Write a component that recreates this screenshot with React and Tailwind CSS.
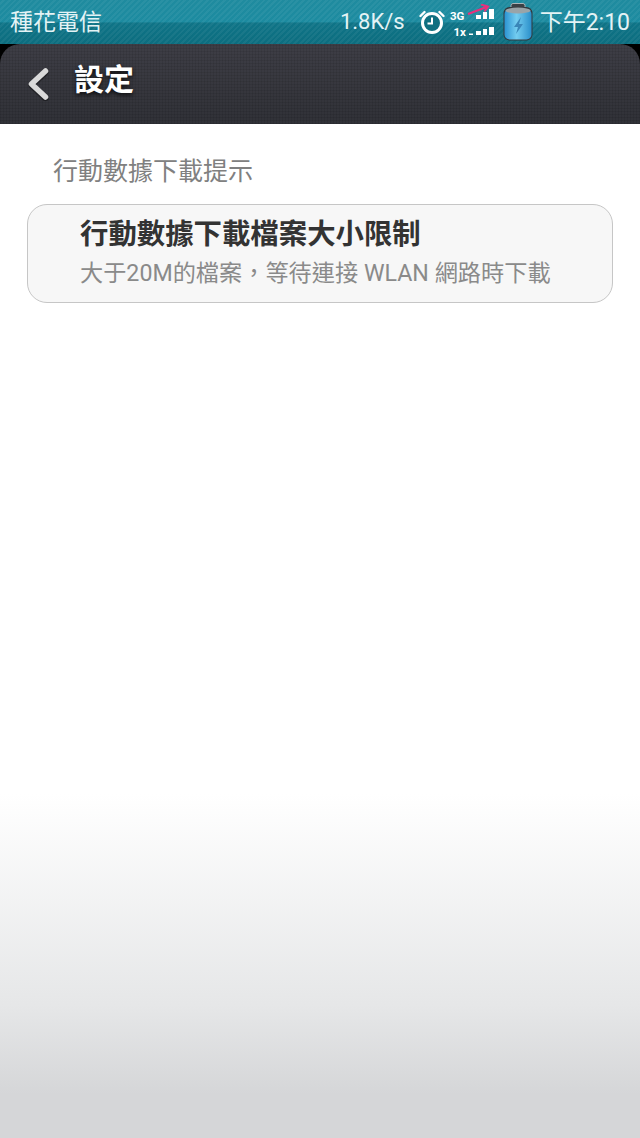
import React from 'react';

const cjk = "font-['Roboto','Noto_Sans_CJK_TC',sans-serif]";

const AlarmIcon = () => (
  <svg width="26" height="24" viewBox="0 0 26 24" fill="none">
    <circle cx="13" cy="13" r="9.5" fill="#0f6f80" stroke="#fff" strokeWidth="3" />
    <path d="M13 7.5V13.5H8.5" stroke="#fff" strokeWidth="2" />
    <path d="M1.5 6 5.5 2M24.5 6 20.5 2" stroke="#fff" strokeWidth="2.4" strokeLinecap="round" />
  </svg>
);

const SignalIcon = () => (
  <svg width="44" height="36" viewBox="0 0 44 36">
    <g fill="#fff">
      <text x="0" y="15.5" fontSize="11.5" fontWeight="700" fontFamily="Roboto, sans-serif">3G</text>
      <text x="3.5" y="31.5" fontSize="11.5" fontWeight="700" fontFamily="Roboto, sans-serif">1x</text>
      <rect x="26" y="11" width="5" height="4" />
      <rect x="33" y="8" width="4" height="7" />
      <rect x="39" y="5" width="5" height="10" />
      <rect x="19" y="29.5" width="4" height="1.5" />
      <rect x="26" y="27" width="5" height="4" />
      <rect x="33" y="25" width="4" height="6" />
      <rect x="39" y="23" width="5" height="8" />
    </g>
    <path d="M18 10 38 2.5M31 0.5l7 2-3.5 5" stroke="#e8307c" strokeWidth="2" fill="none" />
  </svg>
);

const BatteryIcon = () => (
  <svg width="30" height="38" viewBox="0 0 30 38">
    <defs>
      <linearGradient id="batt" x1="0" y1="0" x2="1" y2="0">
        <stop offset="0" stopColor="#2b93d2" />
        <stop offset="0.45" stopColor="#74cdf0" />
        <stop offset="1" stopColor="#2a8fca" />
      </linearGradient>
    </defs>
    <rect x="8" y="0.5" width="14" height="6" rx="2" fill="#3a3f44" stroke="#aab4b8" />
    <rect x="0.5" y="4" width="29" height="33.5" rx="6" fill="#32393e" />
    <rect x="1.5" y="6" width="27" height="30.5" rx="5" fill="url(#batt)" />
    <ellipse cx="15" cy="7.5" rx="12.5" ry="3" fill="#9aa4a8" />
    <path d="M18 14 11 24h4l-2 7 7-10h-4z" fill="#3a86b8" />
  </svg>
);

const BackIcon = () => (
  <svg width="24" height="34" viewBox="0 0 24 34" fill="none">
    <path d="M19.5 4 5.5 17l14 13" stroke="#000" strokeOpacity="0.35" strokeWidth="6" strokeLinecap="round" strokeLinejoin="round" transform="translate(0 1.5)" />
    <path d="M19.5 4 5.5 17l14 13" stroke="#d9d9d9" strokeWidth="5.5" strokeLinecap="round" strokeLinejoin="round" />
  </svg>
);

const App = () => {
  return (
    <div className={`w-[640px] h-[1138px] flex flex-col overflow-hidden bg-black ${cjk}`}>
      {/* status bar */}
      <div className="h-[44px] shrink-0 flex items-center pl-[10px] pr-[10px] text-[#e4f3f5] bg-[repeating-linear-gradient(135deg,transparent_0_2px,rgba(255,255,255,0.05)_2px_4px),linear-gradient(to_bottom,#1f8b9f_0,#1c8ba0_50%,#0f7487_52%,#0c6d7f_100%)]">
        <span className="text-[23px] leading-none">種花電信</span>
        <span className="ml-auto text-[22px] leading-none mr-[14px]">1.8K/s</span>
        <AlarmIcon />
        <div className="ml-[5px] mr-[9px]">
          <SignalIcon />
        </div>
        <BatteryIcon />
        <span className="ml-[7px] text-[23px] leading-none">下午2:10</span>
      </div>

      {/* title bar */}
      <div className="h-[80px] shrink-0 flex items-center pl-[26px] rounded-t-[20px] bg-[repeating-linear-gradient(0deg,rgba(0,0,0,0.08)_0_1px,transparent_1px_3px),repeating-linear-gradient(90deg,rgba(0,0,0,0.08)_0_1px,transparent_1px_3px),linear-gradient(to_bottom,#3e3e46,#303137)]">
        <BackIcon />
        <h1 className="ml-[24px] -mt-[8px] text-[30px] leading-none font-bold text-white [text-shadow:0_2px_4px_rgba(0,0,0,0.8)]">設定</h1>
      </div>

      {/* content */}
      <div className="flex-1 px-[27px] bg-[linear-gradient(to_bottom,#ffffff_0,#ffffff_670px,#e6e7e8_880px,#d5d6d8_970px,#d5d6d8_100%)]">
        <div className="pt-[33px] pl-[26px] text-[25px] leading-[29px] text-[#808080]">行動數據下載提示</div>
        <div className="mt-[18px] h-[99px] w-[586px] pl-[52px] pt-[13px] rounded-[20px] border border-[#c6c6c6] bg-[#f7f7f7]">
          <div className="text-[28.4px] leading-[34px] font-bold text-[#333333]">行動數據下載檔案大小限制</div>
          <div className="mt-[7px] text-[23.2px] leading-[29px] text-[#8a8a8a] whitespace-nowrap">大于20M的檔案，等待連接 WLAN 網路時下載</div>
        </div>
      </div>
    </div>
  );
};

export default App;
